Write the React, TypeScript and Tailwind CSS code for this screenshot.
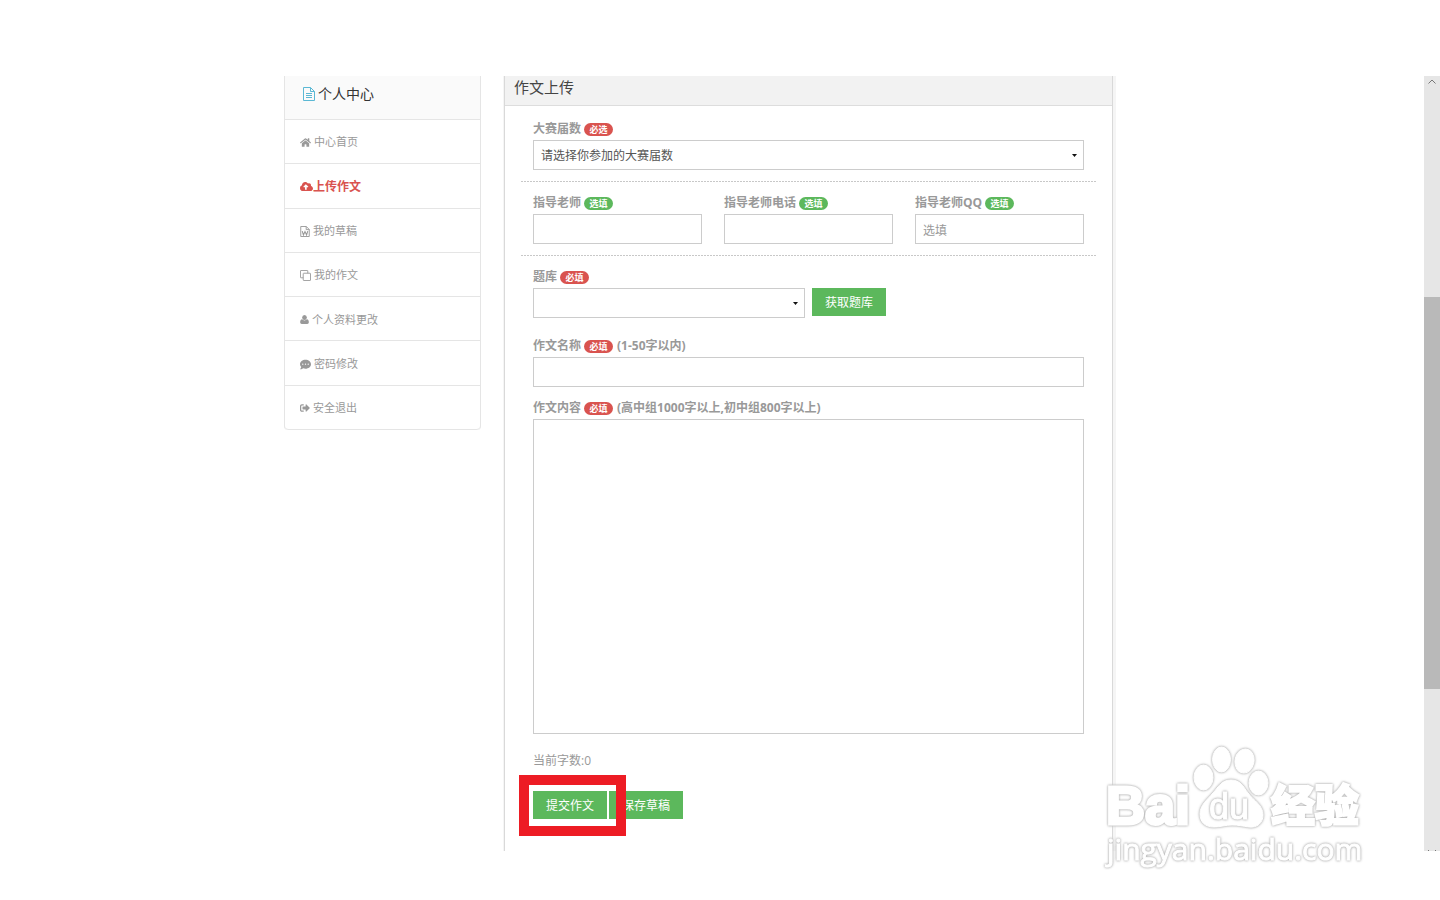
import { useState, type ReactNode } from 'react';
import clsx from 'clsx';
import { FaCloudUploadAlt, FaCommentDots, FaHome, FaSignOutAlt } from 'react-icons/fa';

function FileTextIcon({ className }: { className?: string }) {
  return (
    <svg viewBox="0 0 12 14" className={className} fill="none" stroke="currentColor" aria-hidden="true">
      <path d="M.5.5h7l4 4v9H.5zM7.5.5v4h4M3 6.5h6M3 8.5h6M3 10.5h6" />
    </svg>
  );
}

function FileWordIcon({ className }: { className?: string }) {
  return (
    <svg viewBox="0 0 12 14" className={className} fill="none" stroke="currentColor" aria-hidden="true">
      <path d="M.6.6h7l3.8 3.8v9H.6zM7.5.6v4h4" strokeWidth="1.2" />
      <path d="M2.500 6.500l1.500 5L6 7l2 4.500 1.500-5" strokeWidth="1.4" />
    </svg>
  );
}

function CloneIcon({ className }: { className?: string }) {
  return (
    <svg viewBox="0 0 12 12" className={className} fill="none" stroke="currentColor" aria-hidden="true">
      <rect x="3.5" y="3.5" width="8" height="8" rx=".6" />
      <path d="M3.5 8.5H1a.5.5 0 0 1-.5-.5V1A.5.5 0 0 1 1 .5h7a.5.5 0 0 1 .5.5v2.5" />
    </svg>
  );
}

function UserIcon({ className }: { className?: string }) {
  return (
    <svg viewBox="0 0 10 10" className={className} fill="currentColor" aria-hidden="true">
      <ellipse cx="5" cy="2.800" rx="2.600" ry="2.800" />
      <path d="M2.300 4.800C.8 5 .2 6.400.2 8c0 1.200.7 1.900 1.700 1.900h6.200c1 0 1.700-.7 1.700-1.900 0-1.600-.6-3-2.100-3.200C7 5.600 6.100 6.100 5 6.100S3 5.600 2.300 4.800z" />
    </svg>
  );
}

const menu = [
  { label: '中心首页', icon: <FaHome className="size-[11px]" /> },
  { label: '上传作文', icon: <FaCloudUploadAlt className="size-[13px]" />, active: true },
  { label: '我的草稿', icon: <FileWordIcon className="h-[11px] w-[10px]" /> },
  { label: '我的作文', icon: <CloneIcon className="size-[11px]" /> },
  { label: '个人资料更改', icon: <UserIcon className="size-[9px]" /> },
  { label: '密码修改', icon: <FaCommentDots className="size-[11px]" /> },
  { label: '安全退出', icon: <FaSignOutAlt className="size-[10px]" /> },
];

function Sidebar() {
  return (
    <nav className="w-[197px] shrink-0 self-start rounded-b-sm border-x border-[#e5e5e5]">
      <h2 className="flex h-11 items-center gap-[3px] border-b border-[#e5e5e5] bg-[#fafafa] pb-2 pl-[18px] text-sm text-[#333]">
        <FileTextIcon className="h-[14px] w-3 text-[#5bb8d4]" />
        个人中心
      </h2>
      <ul className="grid h-[310px] auto-rows-fr">
        {menu.map(item => (
          <li key={item.label} className="border-b border-[#e5e5e5] last:rounded-b-sm">
            <a
              href="#"
              className={clsx(
                'flex h-full items-center pt-0.5 pl-[15px]',
                item.active ? 'text-xs font-bold text-[#d9534f]' : 'gap-[3px] text-[11px] text-[#999]'
              )}
            >
              {item.icon}
              {item.label}
            </a>
          </li>
        ))}
      </ul>
    </nav>
  );
}

function Badge({ children, optional }: { children: ReactNode; optional?: boolean }) {
  return (
    <span
      className={clsx(
        'flex h-[13px] w-[29px] items-center justify-center rounded-full text-[9px] leading-none font-bold text-white',
        optional ? 'bg-[#5cb85c]' : 'bg-[#d9534f]'
      )}
    >
      {children}
    </span>
  );
}

interface FieldLabelProps {
  htmlFor: string;
  text: string;
  badge: string;
  optional?: boolean;
  hint?: string;
}

function FieldLabel({ htmlFor, text, badge, optional, hint }: FieldLabelProps) {
  return (
    <label htmlFor={htmlFor} className="flex h-[22px] items-center gap-[3px] text-xs font-bold text-[#999]">
      {text}
      <Badge optional={optional}>{badge}</Badge>
      {hint && <span className="pl-px">{hint}</span>}
    </label>
  );
}

function Select({ id, placeholder, className }: { id: string; placeholder: string; className?: string }) {
  return (
    <div className={clsx('relative', className)}>
      <select
        id={id}
        className="h-[30px] w-full appearance-none border border-[#ccc] bg-white px-[7px] pt-0.5 text-xs text-[#555] outline-none"
      >
        <option>{placeholder}</option>
      </select>
      <svg viewBox="0 0 5 3" className="pointer-events-none absolute top-[14px] right-[7px] h-[3px] w-[5px]" aria-hidden="true">
        <path d="M0 0h5L2.500 3z" fill="#111" />
      </svg>
    </div>
  );
}

function Divider() {
  return <hr className="h-px border-0 bg-[repeating-linear-gradient(90deg,#c8c8c8_0_2px,transparent_2px_3px)]" />;
}

function GreenButton({ children }: { children: ReactNode }) {
  return (
    <button type="button" className="h-7 bg-[#5cb85c] px-[13px] pt-0.5 text-xs text-white">
      {children}
    </button>
  );
}

const inputClass =
  'h-[30px] w-full border border-[#ccc] bg-white px-[7px] pt-0.5 text-xs text-[#555] outline-none placeholder:text-[#999]';

function UploadForm() {
  const [content, setContent] = useState('');

  return (
    <section className="flex min-w-0 flex-1 flex-col border-x border-[#d9d9d9] shadow-[1px_0_0_2px_#f5f5f5]">
      <h1 className="flex h-[30px] items-center border-b border-[#ddd] bg-[#f2f2f2] pb-1.5 pl-[9px] text-[15px] text-[#444]">
        作文上传
      </h1>
      <form className="px-4 pt-3">
        <div className="px-3 pb-[11px]">
          <FieldLabel htmlFor="contest" text="大赛届数" badge="必选" />
          <Select id="contest" placeholder="请选择你参加的大赛届数" />
        </div>
        <Divider />

        <div className="grid grid-cols-3 gap-[22px] px-3 pt-[10px] pb-[11px]">
          <div>
            <FieldLabel htmlFor="teacher" text="指导老师" badge="选填" optional />
            <input id="teacher" className={inputClass} />
          </div>
          <div>
            <FieldLabel htmlFor="phone" text="指导老师电话" badge="选填" optional />
            <input id="phone" className={inputClass} />
          </div>
          <div>
            <FieldLabel htmlFor="qq" text="指导老师QQ" badge="选填" optional />
            <input id="qq" placeholder="选填" className={inputClass} />
          </div>
        </div>
        <Divider />

        <div className="px-3 pt-[10px]">
          <FieldLabel htmlFor="topic" text="题库" badge="必填" />
          <div className="flex gap-[7px]">
            <Select id="topic" placeholder="" className="w-[272px]" />
            <GreenButton>获取题库</GreenButton>
          </div>

          <div className="pt-[17px]">
            <FieldLabel htmlFor="title" text="作文名称" badge="必填" hint="(1-50字以内)" />
            <input id="title" className={inputClass} />
          </div>

          <div className="pt-[10px]">
            <FieldLabel htmlFor="content" text="作文内容" badge="必填" hint="(高中组1000字以上,初中组800字以上)" />
            <textarea
              id="content"
              value={content}
              onChange={e => setContent(e.target.value)}
              className="block h-[315px] w-full resize-none border border-[#ccc] bg-white p-2 text-xs text-[#555] outline-none"
            />
          </div>

          <p className="pt-4 text-xs leading-[22px] text-[#999]">当前字数:{content.length}</p>

          <div className="relative mt-[19px] flex gap-[2px]">
            <GreenButton>提交作文</GreenButton>
            <GreenButton>保存草稿</GreenButton>
            <div className="pointer-events-none absolute -top-4 -left-3.5 h-[61px] w-[107px] border-10 border-[#ed1c24]" />
          </div>
        </div>
      </form>
    </section>
  );
}

function ScrollBar() {
  return (
    <div className="flex w-4 shrink-0 flex-col bg-[#e6e6e6]" aria-hidden="true">
      <div className="flex h-[221px] justify-center pt-[3px]">
        <svg viewBox="0 0 8 5" className="h-[5px] w-2" fill="none" stroke="#777">
          <path d="M.5 4.500L4 1l3.500 3.500" />
        </svg>
      </div>
      <div className="h-[392px] bg-[#b9b9b9]" />
      <div className="flex flex-1 items-end justify-center">
        <svg viewBox="0 0 8 1" className="h-px w-2" fill="#777">
          <path d="M0 0h1v1H0zM7 0h1v1H7z" />
        </svg>
      </div>
    </div>
  );
}

const outline = '[filter:drop-shadow(0_0_1px_#aaa)_drop-shadow(0_0_1px_#ddd)]';

function Watermark() {
  return (
    <svg
      viewBox="1100 740 270 130"
      className="pointer-events-none absolute right-[70px] bottom-[30px] h-[130px] w-[270px]"
      fill="#fff"
      stroke="#fff"
    >
      <g className={outline}>
        <ellipse cx="1203.500" cy="777.500" rx="9.500" ry="12.500" />
        <ellipse cx="1221.500" cy="759.500" rx="9" ry="12.500" />
        <ellipse cx="1244.500" cy="761" rx="9.500" ry="12" transform="rotate(10 1244.500 761)" />
        <ellipse cx="1258.500" cy="783" rx="9.500" ry="12" />
        <path d="M1231 780c9 0 12 6 17 13 6 8 15 12 15 22 0 8-6 13-14 12-7-1-11-2-17-2-7 0-11 2-18 2-9 0-14-5-14-13 0-9 7-14 13-21 6-7 9-13 18-13z" />
      </g>
      <text x="1106" y="824" fontSize="54" strokeWidth="3" className={clsx("font-['Liberation_Sans',sans-serif] font-bold", outline)}>
        Bai
      </text>
      <text x="1209" y="819" fontSize="36" strokeWidth="1" className={clsx("font-['Liberation_Sans',sans-serif]", outline)}>
        du
      </text>
      <text x="1271" y="822" fontSize="44" strokeWidth="2" className={clsx("font-['Noto_Sans_CJK_SC',sans-serif] font-black", outline)}>
        经验
      </text>
      <text x="1107" y="860" fontSize="30" strokeWidth="1" className={clsx("font-['Open_Sans',sans-serif]", outline)}>
        jingyan.baidu.com
      </text>
    </svg>
  );
}

export default function App() {
  return (
    <div className="relative flex min-h-screen flex-col bg-white pt-[76px] pb-[49px] font-['Open_Sans','Noto_Sans_CJK_SC',sans-serif]">
      <div className="flex flex-1 overflow-hidden">
        <main className="flex flex-1 justify-center">
          <div className="flex w-full max-w-[856px] gap-[23px] pr-[27px]">
            <Sidebar />
            <UploadForm />
          </div>
        </main>
        <ScrollBar />
      </div>
      <Watermark />
    </div>
  );
}
